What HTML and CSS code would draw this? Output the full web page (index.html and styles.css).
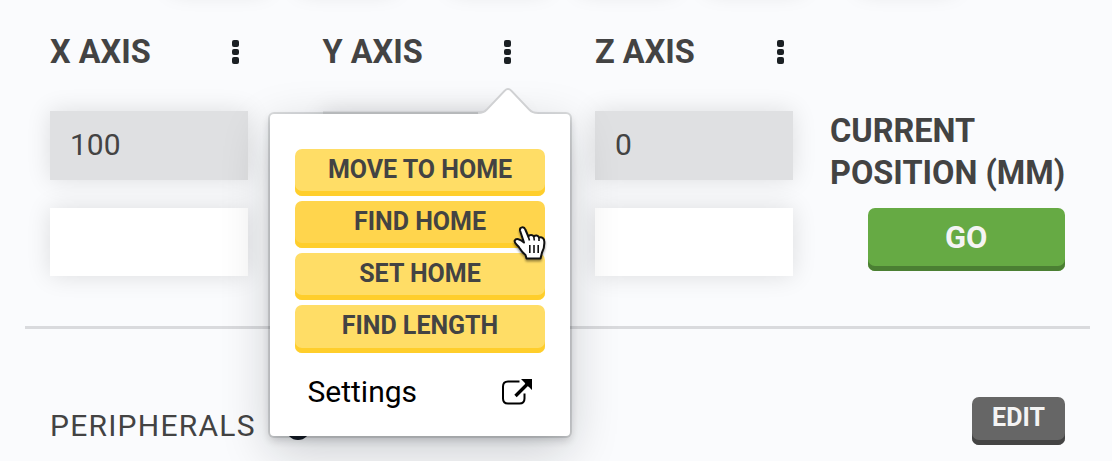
FILE: index.html
```html
<!DOCTYPE html>
<html lang="en">
<head>
<meta charset="utf-8">
<title>Axis controls</title>
<link rel="stylesheet" href="styles.css">
</head>
<body>
<main class="panel">
  <div class="step-row"><i></i><i></i><i class="gap"></i><i></i><i></i><i class="gap"></i></div>
  <section class="axes">
    <header class="axis-head"><h2>X AXIS</h2><span class="dots"><b></b><b></b><b></b></span></header>
    <header class="axis-head"><h2>Y AXIS</h2><span class="dots"><b></b><b></b><b></b></span></header>
    <header class="axis-head"><h2>Z AXIS</h2><span class="dots"><b></b><b></b><b></b></span></header>
    <span></span>
    <div class="field current">100</div>
    <div class="field current"></div>
    <div class="field current">0</div>
    <div class="position-label">CURRENT<br>POSITION (MM)</div>
    <div class="field"></div>
    <div class="field"></div>
    <div class="field"></div>
    <button class="btn go">GO</button>
  </section>
  <hr class="divider">
  <section class="peripherals">
    <h3>PERIPHERALS</h3>
    <span class="help"></span>
    <button class="btn edit">EDIT</button>
  </section>
</main>
<div class="popover">
  <svg class="arrow" width="60" height="30" viewBox="0 0 60 30">
    <path class="arrow-edge" d="M0 26C4 26 6 25 8.500 22.500L26 4Q30 0 34 4L51.500 22.500C54 25 56 26 60 26V28H0Z"/>
    <path class="arrow-fill" d="M0 28C4.500 28 7 26.800 9.500 24.300L27.300 5.500Q30 2.700 32.700 5.500L50.500 24.300C53 26.800 55.500 28 60 28V30H0Z"/>
  </svg>
  <div class="menu">
    <button class="btn action">MOVE TO HOME</button>
    <button class="btn action hover">FIND HOME</button>
    <button class="btn action">SET HOME</button>
    <button class="btn action last">FIND LENGTH</button>
  </div>
  <a class="settings"><span>Settings</span>
    <svg width="32" height="28" viewBox="0 0 32 28">
      <path d="M18.500 3.500H7Q2 3.500 2 8.500V20.500Q2 25.500 7 25.500H18.500Q23.500 25.500 23.500 20.500V15.500" fill="none" stroke="#000" stroke-width="2"/>
      <path d="M20 1H31V12L28 9L25 7L23.500 4.500Z"/>
      <path d="M14.500 18L27 5.500" stroke="#000" stroke-width="3.400"/>
    </svg>
  </a>
</div>
<svg class="cursor" width="36" height="38" viewBox="0 0 36 38">
  <path d="M7 5.500C6.500 2 11 1 12.300 4.500L15.300 11.500C16.500 9.500 19.500 9.500 20.800 11.500C22.500 9.800 25.300 10.300 26 12.500C29 11.500 31.300 13.500 31.300 16.500C31.500 20 31 24 29 27.500L27.500 33.500H13.500L12.500 30C10 28 8 25.500 6.500 23C5 20 .500 18.500 1.800 15.500C3 13 7 14 11 17.500Z" fill="#fff" stroke="#111" stroke-width="2" stroke-linejoin="round"/>
  <path d="M15.300 11.500L16.500 15.500M20.800 11.500L21.300 15.500M26 12.500V16M16.800 20V28M21 20V28M25.200 20V28" stroke="#111" stroke-width="1.600"/>
</svg>
</body>
</html>
```
FILE: styles.css
```css
* { box-sizing: border-box; }
body { margin: 0; width: 1112px; height: 461px; overflow: hidden; position: relative; background: #fafbfd; color: #434343; font-family: Roboto, sans-serif; }
h2, h3 { margin: 0; }
.panel { height: 461px; overflow: hidden; display: flex; flex-direction: column; }
.step-row { display: flex; height: 0; padding-left: 173px; gap: 36px; }
.step-row i { width: 92px; height: 40px; flex: none; margin-top: -52px; box-shadow: 0 0 25px rgba(0,0,0,.18); }
.step-row .gap { margin-left: 24px; }
.axes { display: grid; grid-template-columns: repeat(4, 197.5px); column-gap: 75px; grid-template-rows: 75px 69px 68px; row-gap: 28px; padding: 8px 0 0 50px; }
.axis-head { display: flex; justify-content: space-between; align-items: center; height: 42px; margin-top: 23px; padding-right: 9px; }
.axis-head h2 { font-size: 32.500px; line-height: 42px; }
.dots { display: grid; gap: 2px; }
.dots b { width: 7px; height: 6.700px; border-radius: 2px; background: #1b2024; }
.field { background: #fff; box-shadow: 0 0 25px rgba(0,20,0,.12); }
.field.current { background: #dfe0e2; padding: 13px 20px; font-size: 30px; line-height: 42px; }
.position-label { width: 250px; margin: -1px 0 0 -37.500px; font-size: 32.500px; font-weight: 700; line-height: 42px; white-space: nowrap; }
.btn { border: 0; font-family: inherit; font-weight: 700; border-radius: 7px; padding: 0; display: block; }
.go { height: 63px; background: #66aa44; color: #f4f4f4; box-shadow: inset 0 -5px #4b7f33; font-size: 31px; line-height: 37px; padding-bottom: 5px; }
.divider { width: 1065px; height: 3px; border: 0; background: #d9dadd; margin: 50px 0 0 25px; }
.peripherals { display: flex; padding: 68px 47px 0 50px; }
.peripherals h3 { width: 206px; font-size: 30px; font-weight: 400; letter-spacing: 1.250px; line-height: 58px; }
.help { width: 24px; height: 24px; border-radius: 50%; background: #111722; margin: 19px 0 0 30px; }
.edit { margin-left: auto; width: 93px; height: 48px; background: #666; color: #f4f4f4; box-shadow: inset 0 -5px #444; font-size: 25px; padding-bottom: 7px; }
.popover { position: absolute; left: 270px; top: 114px; width: 300px; height: 322px; background: #fff; border-radius: 4px; padding: 35px 25px; box-shadow: 0 0 0 2px rgba(16,22,26,.12), 0 4px 8px rgba(16,22,26,.2), 0 15px 50px rgba(16,22,26,.2); }
.arrow { position: absolute; left: 207.500px; top: -28px; }
.arrow-edge { fill: #d0d1d3; }
.arrow-fill { fill: #fff; }
.menu { display: grid; gap: 5px; }
.action { height: 47px; color: #434343; background: #ffdd66; box-shadow: inset 0 -5px #ffce2b; font-size: 25px; padding-bottom: 6px; }
.action.hover { background: #ffd54d; }
.action.last { height: 48px; padding-bottom: 7px; }
.settings { display: flex; justify-content: space-between; align-items: center; padding: 0 12px 0 12.500px; margin-top: 18px; color: #000; font-size: 30px; line-height: 42px; }
.settings svg { display: block; }
.cursor { position: absolute; left: 513px; top: 225px; filter: drop-shadow(0 2px 1px rgba(0,0,0,.4)); }
```
